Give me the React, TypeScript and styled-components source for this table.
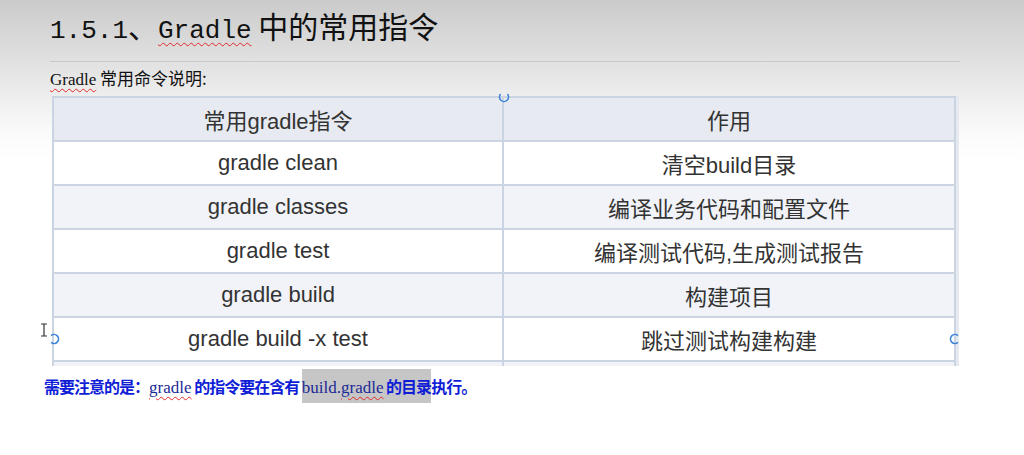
import React from "react";
import styled, { createGlobalStyle } from "styled-components";

const GlobalStyle = createGlobalStyle`
  html, body {
    margin: 0;
    padding: 0;
  }
  body {
    width: 1024px;
    height: 455px;
    overflow: hidden;
    background: #fff;
  }
`;

const Page = styled.div`
  position: relative;
  width: 1024px;
  height: 455px;
  overflow: hidden;
  background: linear-gradient(
    #cbcbcb 0px,
    #d9d9d9 40px,
    #e4e4e4 70px,
    #f1f1f1 105px,
    #fbfbfb 135px,
    #fff 160px
  );
  font-family: "Noto Sans CJK SC", sans-serif;
`;

const Title = styled.h1`
  margin: 0;
  padding: 3px 0 0 50px;
  height: 44px;
  line-height: 44px;
  font-size: 30px;
  font-weight: 400;
  color: #111;
  font-family: "Noto Sans CJK SC", serif;
  white-space: nowrap;
`;

const Mono = styled.span<{ $squiggle?: boolean }>`
  font-family: "Liberation Mono", monospace;
  font-size: 26px;
  text-decoration: ${(p) => (p.$squiggle ? "underline wavy #e02a2a" : "none")};
  text-decoration-thickness: 1px;
  text-underline-offset: 4px;
`;

const Rule = styled.div`
  margin: 14px 64px 0 50px;
  height: 1px;
  background: #c8c8c8;
  box-shadow: 0 1px 0 #e4e4e4;
`;

const SubTitle = styled.p`
  margin: 4px 0 0;
  padding-left: 50px;
  height: 24px;
  line-height: 24px;
  font-size: 17px;
  color: #111;
  font-family: "Noto Sans CJK SC", sans-serif;
`;

const Serif = styled.span<{ $squiggle?: boolean; $color?: string }>`
  font-family: "Liberation Serif", serif;
  font-size: 17px;
  font-weight: 400;
  letter-spacing: 0;
  color: ${(p) => p.$color || "inherit"};
  text-decoration: ${(p) => (p.$squiggle ? "underline wavy #e02a2a" : "none")};
  text-decoration-thickness: 1px;
  text-underline-offset: 3px;
`;

const TableArea = styled.div`
  position: relative;
  margin: 6px 0 0 52px;
  width: 904px;
`;

const TableClip = styled.div`
  height: 270px;
  overflow: hidden;
  box-shadow: 3px 0 0 #e6e9ef;
`;

const Table = styled.div`
  border: 2px solid #cbd4e3;
  border-bottom: none;
`;

const Row = styled.div<{ $bg: string }>`
  display: grid;
  grid-template-columns: 1fr 1fr;
  height: 44px;
  box-sizing: border-box;
  border-bottom: 2px solid #cbd4e3;
  background: ${(p) => p.$bg};
`;

const Cell = styled.div`
  display: flex;
  align-items: center;
  justify-content: center;
  font-family: "Liberation Sans", "Noto Sans CJK SC", sans-serif;
  font-size: 22px;
  color: #333;
  white-space: nowrap;

  &:first-child {
    border-right: 2px solid #cbd4e3;
  }
`;

const Handle = styled.svg<{ $x: number; $y: number; $turn: number }>`
  position: absolute;
  left: ${(p) => p.$x - 6}px;
  top: ${(p) => p.$y - 6}px;
  width: 12px;
  height: 12px;
  transform: rotate(${(p) => p.$turn}deg);
`;

const Cursor = styled.svg`
  position: absolute;
  left: -12px;
  top: 227px;
  width: 8px;
  height: 14px;
`;

const Note = styled.p`
  margin: 3px 0 0;
  padding-left: 44px;
  height: 34px;
  line-height: 34px;
  font-size: 16px;
  letter-spacing: -1px;
  font-weight: 700;
  color: #0f1ed6;
  white-space: nowrap;
`;

const Marked = styled.span`
  display: inline-block;
  height: 34px;
  background: #c6c6c6;
`;

const rows: [string, string][] = [
  ["常用gradle指令", "作用"],
  ["gradle clean", "清空build目录"],
  ["gradle classes", "编译业务代码和配置文件"],
  ["gradle test", "编译测试代码,生成测试报告"],
  ["gradle build", "构建项目"],
  ["gradle build -x test", "跳过测试构建构建"],
  ["", ""],
];

const shades = ["#e7eaf0", "#ffffff", "#f1f3f8", "#ffffff", "#f1f3f8", "#ffffff", "#f1f3f8"];

function SelectHandle({ x, y, turn }: { x: number; y: number; turn: number }) {
  return (
    <Handle $x={x} $y={y} $turn={turn} viewBox="0 0 12 12">
      <path
        d="M8.9 2.55 A4.5 4.5 0 1 0 8.9 9.45"
        fill="none"
        stroke="#3b82d8"
        strokeWidth="1.6"
      />
    </Handle>
  );
}

export default function App() {
  return (
    <>
      <GlobalStyle />
      <Page>
        <Title>
          <Mono>1.5.1</Mono>、<Mono $squiggle>Gradle</Mono> 中的常用指令
        </Title>
        <Rule />
        <SubTitle>
          <Serif $squiggle>Gradle</Serif> 常用命令说明:
        </SubTitle>
        <TableArea>
          <TableClip>
            <Table>
              {rows.map(([cmd, desc], i) => (
                <Row key={i} $bg={shades[i]}>
                  <Cell>{cmd}</Cell>
                  <Cell>{desc}</Cell>
                </Row>
              ))}
            </Table>
          </TableClip>
          <SelectHandle x={452} y={1} turn={-90} />
          <SelectHandle x={2} y={243} turn={180} />
          <SelectHandle x={903} y={243} turn={0} />
          <Cursor viewBox="0 0 8 14">
            <path d="M1 1 H7 M4 1 V13 M1 13 H7" fill="none" stroke="#333" strokeWidth="1.2" />
          </Cursor>
        </TableArea>
        <Note>
          需要注意的是：<Serif $squiggle $color="#1c2a96">gradle</Serif> 的指令要在含有{" "}
          <Marked>
            <Serif $color="#1c2a96">
              build.<Serif $squiggle>gradle</Serif>
            </Serif>{" "}
            的目录
          </Marked>
          执行。
        </Note>
      </Page>
    </>
  );
}
